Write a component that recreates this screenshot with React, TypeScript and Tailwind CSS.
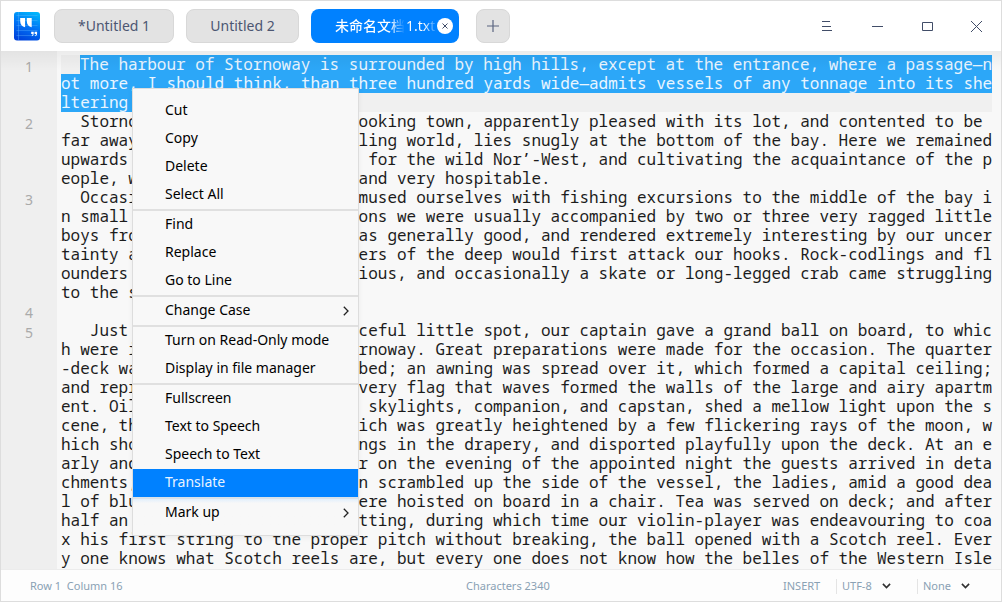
import type { ReactNode } from "react";

const intro = [
  "The harbour of Stornoway is surrounded by high hills, except at the entrance, where a passage—n",
  "ot more, I should think, than three hundred yards wide—admits vessels of any tonnage into its she",
  "ltering ",
];

const lines: [string, string?][] = [
  ["  Stornow", "ooking town, apparently pleased with its lot, and contented to be"],
  ["far away", "ling world, lies snugly at the bottom of the bay. Here we remained"],
  ["upwards ", " for the wild Nor’-West, and cultivating the acquaintance of the p"],
  ["eople, w", "and very hospitable."],
  ["  Occasi", "mused ourselves with fishing excursions to the middle of the bay i"],
  ["n small ", "ons we were usually accompanied by two or three very ragged little"],
  ["boys fro", "as generally good, and rendered extremely interesting by our uncer"],
  ["tainty a", "ers of the deep would first attack our hooks. Rock-codlings and fl"],
  ["ounders ", "ious, and occasionally a skate or long-legged crab came struggling"],
  ["to the s"],
  [" "],
  ["   Just ", "ceful little spot, our captain gave a grand ball on board, to whic"],
  ["h were i", "rnoway. Great preparations were made for the occasion. The quarter"],
  ["-deck wa", "bed; an awning was spread over it, which formed a capital ceiling;"],
  ["and repr", "very flag that waves formed the walls of the large and airy apartm"],
  ["ent. Oil", " skylights, companion, and capstan, shed a mellow light upon the s"],
  ["cene, th", "ich was greatly heightened by a few flickering rays of the moon, w"],
  ["hich sho", "ngs in the drapery, and disported playfully upon the deck. At an e"],
  ["arly and", "r on the evening of the appointed night the guests arrived in deta"],
  ["chments;", "n scrambled up the side of the vessel, the ladies, amid a good dea"],
  ["l of blu", "ere hoisted on board in a chair. Tea was served on deck; and after"],
  ["half an ", "tting, during which time our violin-player was endeavouring to coa"],
  ["x his first string to the proper pitch without breaking, the ball opened with a Scotch reel. Ever"],
  ["y one knows what Scotch reels are, but every one does not know how the belles of the Western Isle"],
];

const menu: { label: string; sub?: boolean; active?: boolean }[][] = [
  [{ label: "Cut" }, { label: "Copy" }, { label: "Delete" }, { label: "Select All" }],
  [{ label: "Find" }, { label: "Replace" }, { label: "Go to Line" }],
  [{ label: "Change Case", sub: true }],
  [{ label: "Turn on Read-Only mode" }, { label: "Display in file manager" }],
  [{ label: "Fullscreen" }, { label: "Text to Speech" }, { label: "Speech to Text" }, { label: "Translate", active: true }],
  [{ label: "Mark up", sub: true }],
];

function Logo() {
  return (
    <svg className="ml-[13px] h-[29px] w-[27px] shrink-0" viewBox="0 0 27 29">
      <defs>
        <linearGradient id="logo" x1="0.7" y1="0" x2="0.35" y2="1">
          <stop offset="0" stopColor="#00b4fb" />
          <stop offset="0.5" stopColor="#0072f5" />
          <stop offset="1" stopColor="#0044dc" />
        </linearGradient>
      </defs>
      <rect x="0" y="0" width="26" height="28.5" rx="3" fill="url(#logo)" />
      <path d="M2.5 3.5h21M2.5 8.5h21M2.5 13.5h21M2.5 18.5h21M2.5 23.5h21" stroke="#6fc0ff" strokeOpacity=".4" strokeWidth=".8" />
      <path d="M4.5 0v28" stroke="#5aaeff" strokeOpacity=".5" strokeWidth=".8" />
      <path
        d="M6.2 6h4.9v9.2c-3.1-.7-4.8-2.9-4.9-6zM12.8 6h4.9v9.2c-3.1-.7-4.8-2.9-4.9-6z"
        fill="#fff"
      />
      <path d="M17.2 19.7h2.5v1.9c0 1.3-.6 2.1-1.9 2.7v-.9c.6-.4.8-.8.8-1.3h-1.4zM20.6 19.7h2.5v1.9c0 1.3-.6 2.1-1.9 2.7v-.9c.6-.4.8-.8.8-1.3h-1.4z" fill="#fff" />
    </svg>
  );
}

function Tab({ className, children }: { className: string; children: ReactNode }) {
  return (
    <div className={`flex h-[34px] shrink-0 items-center justify-center rounded-lg border border-[#d8d8d8] bg-[#e3e3e3] text-[14px] text-[#4c5672] ${className}`}>
      {children}
    </div>
  );
}

function TitleBar() {
  return (
    <header className="flex h-[50px] shrink-0 items-center bg-white">
      <div className="flex flex-1 items-center">
        <Logo />
        <Tab className="ml-[13px] w-[120px] pb-[2px]">*Untitled 1</Tab>
        <Tab className="ml-3 w-[113px] pb-[2px]">Untitled 2</Tab>
        <div className="ml-3 flex h-[34px] w-[148px] shrink-0 items-center rounded-lg bg-[#0081ff] pl-6 text-[14px] whitespace-nowrap text-white">
          <span className="w-[69px] overflow-hidden bg-linear-to-r from-white from-80% to-white/5 bg-clip-text pb-[2px] font-medium text-transparent">未命名文档</span>
          <span className="ml-[2px] w-[30px] overflow-hidden bg-linear-to-r from-white from-60% to-white/10 bg-clip-text pb-[2px] text-transparent">1.txt</span>
          <svg className="ml-px h-4 w-4" viewBox="0 0 16 16">
            <circle cx="8" cy="8" r="8" fill="#fff" />
            <path d="M5.5 5.5l5 5M10.5 5.5l-5 5" stroke="#414d68" strokeWidth="1" />
          </svg>
        </div>
        <Tab className="ml-[17px] w-[34px]">
          <svg className="h-3 w-3" viewBox="0 0 12 12">
            <path d="M6 0v12M0 6h12" stroke="#5a6580" strokeWidth="1.2" />
          </svg>
        </Tab>
      </div>
      <div className="flex shrink-0 gap-6 pt-[2px] pr-3 text-[#414d68]">
        {["M9 6.5h8M9 11.5h9M9 15.5h10", "M9 11.5h11", "M9.5 7.5h10v8h-10z", "M8 6l11 11M19 6l-11 11"].map((d) => (
          <svg key={d} className="h-6 w-[26px]" viewBox="0 0 26 24">
            <path d={d} fill="none" stroke="currentColor" strokeWidth="1" />
          </svg>
        ))}
      </div>
    </header>
  );
}

function ContextMenu() {
  return (
    <nav className="absolute top-[37px] left-[131px] w-[227px] border border-[#dddddd] bg-[#f8f8f8] py-2 text-[14px] text-black shadow-[0_2px_6px_rgba(0,0,0,0.05)]">
      {menu.map((group, i) => (
        <div
          key={i}
          className={
            i === menu.length - 1
              ? "border-t-2 border-[#d9e2ea] bg-linear-to-b from-[#e2effc] to-[#f8f8f8] to-15%"
              : i > 0
                ? "border-t-2 border-[#e0e0e0]"
                : ""
          }
        >
          {group.map((item) => (
            <div
              key={item.label}
              className={`flex h-7 items-center justify-between pr-[9px] pl-8 ${item.active ? "bg-[#0081ff] text-[#e8f3ff]" : ""}`}
            >
              <span className="pb-1">{item.label}</span>
              {item.sub && (
                <svg className="h-[10px] w-[6px]" viewBox="0 0 6 10">
                  <path d="M.8.8L5 5 .8 9.2" fill="none" stroke="#222" strokeWidth="1.3" />
                </svg>
              )}
            </div>
          ))}
        </div>
      ))}
    </nav>
  );
}

function Editor() {
  return (
    <main className="relative flex h-[518px] shrink-0 bg-[#f8f8f8]">
      <div className="flex w-14 shrink-0 flex-col bg-[#efefef] pt-[6px] text-center text-[14px] leading-[19px] text-[#aaaaaa]">
        <div className="h-[57px]">1</div>
        <div className="h-[76px]">2</div>
        <div className="h-[113px]">3</div>
        <div className="h-5">4</div>
        <div>5</div>
      </div>
      <div className="ml-1 w-[931px] pt-1 font-['Noto_Sans_Mono','DejaVu_Sans_Mono',monospace] text-[16px] leading-[19px] whitespace-pre text-[#1c1c1c]">
        <div className="bg-[#f0f0f0] text-[#e9f5ff]">
          <div className="flex h-[19px]">
            <span className="w-[19px]" />
            <span className="flex-1 bg-[#2ca7f8]">{intro[0]}</span>
          </div>
          <div className="h-[19px] bg-[#2ca7f8]">{intro[1]}</div>
          <div className="flex h-[19px]">
            <span className="bg-[#2ca7f8]">{intro[2]}</span>
          </div>
        </div>
        {lines.map(([head, tail], i) => (
          <div key={i} className="flex h-[19px]">
            <span className={tail ? "w-[31ch] shrink-0" : ""}>{head}</span>
            {tail && <span>{tail}</span>}
          </div>
        ))}
      </div>
      <div className="pointer-events-none absolute inset-x-0 top-0 h-5 bg-linear-to-b from-black/[0.05] to-transparent" />
      <ContextMenu />
    </main>
  );
}

function Chevron() {
  return (
    <svg className="h-[6px] w-[9px]" viewBox="0 0 9 6">
      <path d="M.9.9l3.6 3.6L8.1.9" fill="none" stroke="#303030" strokeWidth="1.6" />
    </svg>
  );
}

function StatusBar() {
  return (
    <footer className="flex min-h-0 flex-1 items-center border-t border-[#ececec] bg-[#fdfdfd] pt-px text-[11px] whitespace-pre text-[#8aa1b4]">
      <div className="w-[465px] pl-[29px]">{"Row 1  Column 16"}</div>
      <div className="flex-1">Characters 2340</div>
      <div className="w-[53px]">INSERT</div>
      <div className="flex h-[15px] w-[81px] items-center border-l border-[#e4e4e4] pl-[5px]">
        <span className="w-10">UTF-8</span>
        <Chevron />
      </div>
      <div className="flex h-[15px] w-[84px] items-center border-l border-[#e4e4e4] pl-[5px]">
        <span className="w-[38px]">None</span>
        <Chevron />
      </div>
    </footer>
  );
}

export default function App() {
  return (
    <div className="flex h-[602px] w-[1002px] flex-col overflow-hidden border border-[#dddddd] font-['Noto_Sans','Noto_Sans_CJK_SC',sans-serif]">
      <TitleBar />
      <Editor />
      <StatusBar />
    </div>
  );
}
